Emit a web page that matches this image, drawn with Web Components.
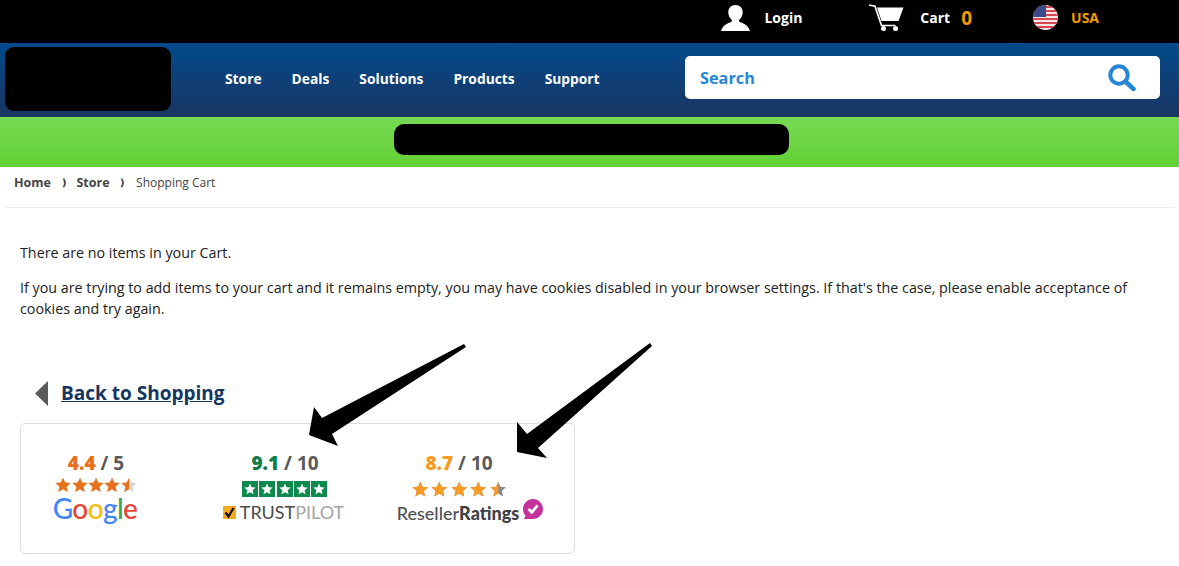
<!DOCTYPE html>
<html lang="en">
<head>
<meta charset="utf-8">
<title>Shopping Cart</title>
<style>
  html, body { margin: 0; background: #fff; }
  body { font-family: "Open Sans", "Noto Sans", sans-serif; overflow: hidden; height: 566px; position: relative; }
</style>
</head>
<body>
<top-bar></top-bar>
<main-nav></main-nav>
<promo-strip></promo-strip>
<bread-crumbs></bread-crumbs>
<cart-message></cart-message>
<back-link>Back to Shopping</back-link>
<rating-box>
  <rating-cell score="4.4" out-of="5" color="#e8701a">
    <star-row color="#e8701a" rest="#d4d4d4" value="4.5" size="16" step="16.4" style="margin-top:2px"></star-row>
    <span class="google" slot="logo" style="font:500 28px/30px Lato,sans-serif;letter-spacing:-.6px;margin:0 0 0 -2px;display:block"><span style="color:#4285f4">G</span><span style="color:#ea4335">o</span><span style="color:#fbbc05">o</span><span style="color:#4285f4">g</span><span style="color:#34a853">l</span><span style="color:#ea4335">e</span></span>
  </rating-cell>
  <rating-cell score="9.1" out-of="10" color="#0f7c4a">
    <green-stars></green-stars>
    <trust-logo slot="logo"></trust-logo>
  </rating-cell>
  <rating-cell score="8.7" out-of="10" color="#f99a25">
    <star-row color="#f99a25" rest="#8a8a8a" value="4.5" size="16.5" step="19.4" style="margin-top:6px"></star-row>
    <reseller-logo slot="logo"></reseller-logo>
  </rating-cell>
</rating-box>
<note-arrows></note-arrows>

<script>
// Small helper so every component just declares its css + markup
function component(name, markup, setup) {
  customElements.define(name, class extends HTMLElement {
    connectedCallback() {
      if (this.shadowRoot) return;
      this.attachShadow({ mode: "open" }).innerHTML = typeof markup === "function" ? markup(this) : markup;
      if (setup) setup(this);
    }
  });
}

component("top-bar", `
  <style>
    :host { display: flex; justify-content: flex-end; align-items: center; height: 43px; box-sizing: border-box; background: #000; color: #fff;
      font: 700 14px "Open Sans", sans-serif; padding: 0 80px 8px 0; }
    .item { display: flex; align-items: center; }
    .login { margin-right: 67px; }
    .login svg { margin-right: 14px; }
    .cart { margin-right: 61px; }
    .cart svg { margin-right: 16px; }
    .count { color: #f59b00; font-size: 19px; margin-left: 11px; line-height: 20px; }
    .usa svg { margin-right: 13px; }
    .usa span { color: #f59b00; }
  </style>
  <div class="item login">
    <svg width="29" height="26" viewBox="0 0 29 26"><path fill="#fff" d="M14.500 0C10 0 7.300 3.200 7.300 7.300c0 3.400 1.800 6 3.400 7.500.5.800.3 1.700-.6 2.200C7 18.500 2.400 19 0 26h29c-2.400-7-7-7.500-10.100-9-.9-.5-1.100-1.400-.6-2.200 1.600-1.500 3.400-4.100 3.400-7.500C21.700 3.200 19 0 14.500 0z"/></svg>
    <span>Login</span>
  </div>
  <div class="item cart">
    <svg width="35" height="27" viewBox="0 0 35 27"><path fill="none" stroke="#fff" stroke-width="1.700" d="M0 1l6 1.200 6.500 19.300h14"/><path fill="#fff" d="M8 3.500h26.500L29.500 17H12.500z"/><circle cx="14.500" cy="24.500" r="2.500" fill="#fff"/><circle cx="26.500" cy="24.500" r="2.500" fill="#fff"/></svg>
    <span>Cart</span><span class="count">0</span>
  </div>
  <div class="item usa">
    <svg width="25" height="25" viewBox="0 0 25 25">
      <defs><clipPath id="round"><circle cx="12.500" cy="12.500" r="12.500"/></clipPath></defs>
      <g clip-path="url(#round)">
        <rect width="25" height="25" fill="#f2e6e6"/>
        <path stroke="#d8474f" stroke-width="2" d="M0 2h25M0 6h25M0 10h25M0 14h25M0 18h25M0 22h25"/>
        <rect width="13" height="12" fill="#3b4a8c"/>
      </g>
    </svg>
    <span>USA</span>
  </div>
`);

component("main-nav", `
  <style>
    :host { display: flex; align-items: center; height: 74px; box-sizing: border-box;
      background: linear-gradient(#034a8c, #1a3562); padding: 0 19px 0 5px; }
    .logo { width: 166px; height: 64px; background: #000; border-radius: 9px; margin-right: 54px; margin-top: -2px; }
    nav { display: flex; gap: 30px; font: 700 13.800px "Open Sans", sans-serif; color: #fff; width: 460px; margin-top: -4px; }
    .search { flex: 1; height: 43px; background: #fff; border-radius: 5px; display: flex; align-items: center;
      justify-content: space-between; padding: 0 24px 0 15px; margin-top: -6px; color: #2686d6; font: 700 16.300px "Open Sans", sans-serif; }
    .search span { padding-top: 2px; }
  </style>
  <div class="logo"></div>
  <nav><span>Store</span><span>Deals</span><span>Solutions</span><span>Products</span><span>Support</span></nav>
  <div class="search">
    <span>Search</span>
    <svg width="28" height="27" viewBox="0 0 28 27"><circle cx="11" cy="11" r="8.700" fill="none" stroke="#2686d6" stroke-width="4"/><path d="M17.500 17.500l8 7.500" stroke="#2686d6" stroke-width="4.500" stroke-linecap="round"/></svg>
  </div>
`);

component("promo-strip", `
  <style>
    :host { display: flex; justify-content: center; height: 50px; background: linear-gradient(#76da52, #63d035); padding-top: 7px; box-sizing: border-box; }
    div { width: 395px; height: 31px; margin-left: 4px; background: #000; border-radius: 10px; }
  </style>
  <div></div>
`);

component("bread-crumbs", `
  <style>
    :host { display: flex; align-items: center; margin: 0 5px; height: 41px; box-sizing: border-box; padding: 0 9px; border-bottom: 1px solid #ececec;
      font: 12px "Open Sans", sans-serif; color: #444; }
    b { font-weight: 700; font-size: 12.500px; }
    i { font-style: normal; font-size: 10px; width: 25.500px; text-align: center; margin-top: -1px; }
    span { margin-left: 1px; }
    div { display: flex; align-items: center; margin-top: -10px; }
  </style>
  <div><b>Home</b><i>&#x276B;</i><b>Store</b><i>&#x276B;</i><span>Shopping Cart</span></div>
`);

component("cart-message", `
  <style>
    :host { display: block; padding: 35px 30px 0 20px; font: 14.300px/20.600px "Open Sans", sans-serif; color: #222; }
    p { margin: 0 0 14.400px; }
  </style>
  <p>There are no items in your Cart.</p>
  <p>If you are trying to add items to your cart and it remains empty, you may have cookies disabled in your browser settings. If that's the case, please enable acceptance of cookies and try again.</p>
`);

component("back-link", `
  <style>
    :host { display: flex; align-items: center; margin: 59px 0 0 35px; height: 30px; }
    svg { margin-right: 13px; }
    a { font: 700 19px "Open Sans", sans-serif; color: #14365f; text-decoration: underline; }
  </style>
  <svg width="13" height="25" viewBox="0 0 13 25"><path fill="#5b5b5b" d="M13 0v25L0 12.500z"/></svg>
  <a href="#"><slot></slot></a>
`);

component("rating-box", `
  <style>
    :host { display: grid; grid-template-columns: 150px 228px 120px; box-sizing: border-box; width: 555px; height: 131px; margin: 15px 0 0 20px;
      border: 1px solid #ddd; border-radius: 5px; padding-top: 27px; }
  </style>
  <slot></slot>
`);

component("rating-cell", (el) => `
  <style>
    :host { display: flex; flex-direction: column; align-items: center; font: 700 19px/24px "Open Sans", sans-serif; color: #5a5a5a; }
    b { color: ${el.getAttribute("color")}; }
  </style>
  <div><b>${el.getAttribute("score")}</b> / ${el.getAttribute("out-of")}</div>
  <slot></slot>
  <slot name="logo"></slot>
`);

const STAR = "M10 .8l2.700 6.200 6.800.6-5.100 4.500 1.500 6.600L10 15.300 4.100 18.700l1.500-6.600L.5 7.600l6.800-.6z";

// value can be fractional, the remainder of that star gets the rest colour
component("star-row", (el) => {
  const size = +el.getAttribute("size");
  const step = +el.getAttribute("step");
  const value = +el.getAttribute("value");
  const color = el.getAttribute("color");
  const rest = el.getAttribute("rest");
  let stars = "";
  for (let i = 0; i < 5; i++) {
    const part = Math.max(0, Math.min(1, value - i));
    stars += `<svg width="${size}" height="${size}" viewBox="0 0 20 20">
      <defs><clipPath id="c${i}"><rect width="${part * 20}" height="20"/></clipPath></defs>
      <path fill="${rest}" d="${STAR}"/><path fill="${color}" clip-path="url(#c${i})" d="${STAR}"/></svg>`;
  }
  return `<style>:host { display: flex; justify-content: center; height: ${size}px; gap: ${step - size}px; }
    svg { display: block; }</style>${stars}`;
});

component("green-stars", () => {
  let boxes = "";
  for (let i = 0; i < 5; i++) {
    boxes += `<span><svg width="12" height="12" viewBox="0 0 20 20"><path fill="#fff" d="${STAR}"/></svg></span>`;
  }
  return `<style>
    :host { display: flex; gap: 1.300px; margin: 6px 0 0 -1px; }
    span { display: flex; align-items: center; justify-content: center; width: 16px; height: 16px; background: #0c8a4d; }
  </style>${boxes}`;
});

component("trust-logo", `
  <style>
    :host { display: flex; align-items: center; font: 400 18px/24px "Lato", sans-serif; color: #4a4a4a; margin: 3px 0 0 -3px; }
    svg { margin-right: 4px; }
    span { color: #a4a4a4; }
  </style>
  <svg width="13" height="13" viewBox="0 0 13 13"><rect width="13" height="13" fill="#f7a823"/><path d="M2.500 6.500l3 4 5-8.500" fill="none" stroke="#111" stroke-width="2.300"/></svg>
  TRUST<span>PILOT</span>
`);

component("reseller-logo", `
  <style>
    :host { display: flex; align-items: center; font: 500 18px/20px "Lato", sans-serif; color: #4d5157; margin: 5.500px 0 0 22px; white-space: nowrap; }
    b { font-weight: 900; color: #3d4146; }
    svg { margin: -9px 0 0 4px; flex: none; }
  </style>
  <span>Reseller<b>Ratings</b></span>
  <svg width="20" height="20" viewBox="0 0 20 20"><path fill="#c4309c" d="M10 0c5.500 0 10 4.500 10 10s-4.500 10-10 10H1l1.500-3.200C.9 15 0 12.600 0 10 0 4.500 4.500 0 10 0z"/><path fill="none" stroke="#fff" stroke-width="2.800" d="M5.500 10l3.300 3.300 5.700-7"/></svg>
`);

// black hand drawn arrows laid over the page
component("note-arrows", `
  <style>
    :host { position: absolute; inset: 0; pointer-events: none; }
    svg { display: block; }
  </style>
  <svg width="1179" height="566" viewBox="0 0 1179 566">
    <path d="M464 344l2 3-134 87 6 12-29-11 5-28 8 11z"/>
    <path d="M650 343l2 3-114 102 9 10-30-6v-30l10 12z"/>
  </svg>
`);
</script>
</body>
</html>
